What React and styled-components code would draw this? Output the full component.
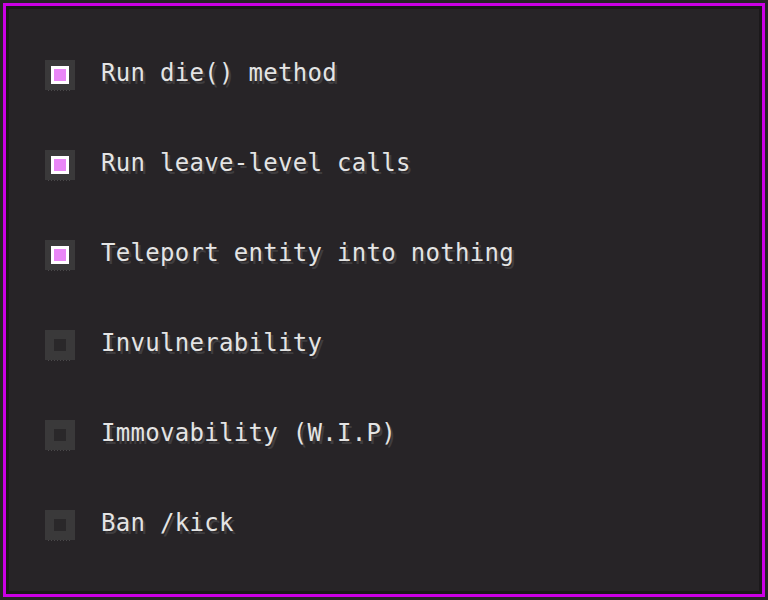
import styled, { createGlobalStyle } from 'styled-components';

const GlobalStyle = createGlobalStyle`
  html, body {
    margin: 0;
    padding: 0;
    background: #272427;
  }
  * {
    box-sizing: border-box;
  }
`;

const options = [
  { id: 1, label: 'Run die() method', checked: true },
  { id: 2, label: 'Run leave-level calls', checked: true },
  { id: 3, label: 'Teleport entity into nothing', checked: true },
  { id: 4, label: 'Invulnerability', checked: false },
  { id: 5, label: 'Immovability (W.I.P)', checked: false },
  { id: 6, label: 'Ban /kick', checked: false },
];

function App() {
  return (
    <>
      <GlobalStyle />
      <StFrame>
        <StPanel>
          {options.map(opt => (
            <StRow key={opt.id}>
              <StBox>
                <StMark checked={opt.checked} />
              </StBox>
              <StLabel>{opt.label}</StLabel>
            </StRow>
          ))}
        </StPanel>
      </StFrame>
    </>
  );
}

export default App;

const StFrame = styled.div`
  margin: 3px;
  height: 594px;
  border: 3px solid #cc00e6;
`;

const StPanel = styled.div`
  height: 100%;
  border: 3px solid #1b191b;
  background: #272427;
  padding: 51px 0 0 36px;
  display: flex;
  flex-direction: column;
  gap: 60px;
`;

const StRow = styled.div`
  display: flex;
  align-items: center;
  height: 30px;
  gap: 26px;
`;

const StBox = styled.div`
  position: relative;
  width: 30px;
  height: 30px;
  flex-shrink: 0;
  background: #3a393a;
  display: flex;
  align-items: center;
  justify-content: center;

  &::after {
    content: '';
    position: absolute;
    left: 3px;
    right: 3px;
    bottom: -1px;
    height: 1px;
    background: repeating-linear-gradient(90deg, #4a484a 0 1px, transparent 1px 3px);
  }
`;

const StMark = styled.div`
  width: ${p => (p.checked ? '18px' : '12px')};
  height: ${p => (p.checked ? '18px' : '12px')};
  background: ${p => (p.checked ? '#ea86f7' : '#2a282a')};
  border: ${p => (p.checked ? '3px solid #ffffff' : 'none')};
`;

const StLabel = styled.span`
  font-family: 'DejaVu Sans Mono', 'Liberation Mono', monospace;
  font-size: 24px;
  letter-spacing: 0.3px;
  line-height: 30px;
  color: #e4e4e4;
  text-shadow: 2.5px 2.5px 0 #3f3d3f;
  margin-top: -5px;
  white-space: nowrap;
`;
